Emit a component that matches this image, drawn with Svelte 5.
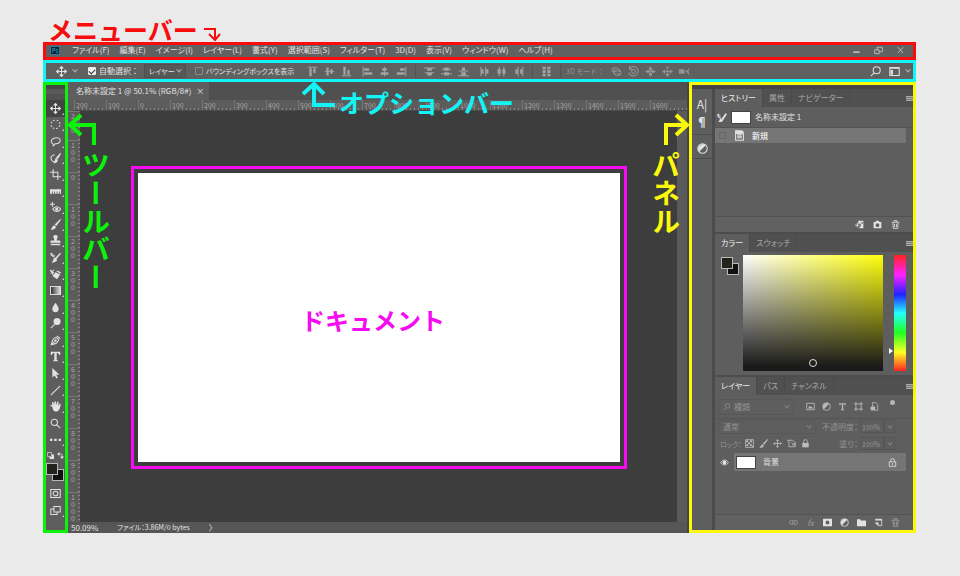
<script lang="ts">
	interface Icon {
		name: string;
		line?: string;
		fill?: string;
	}

	const menus = [
		'ファイル(F)', '編集(E)', 'イメージ(I)', 'レイヤー(L)', '書式(Y)', '選択範囲(S)',
		'フィルター(T)', '3D(D)', '表示(V)', 'ウィンドウ(W)', 'ヘルプ(H)'
	];

	const move = 'M7 1v12M1 7h12M5 3l2-2 2 2M5 11l2 2 2-2M3 5L1 7l2 2M11 5l2 2-2 2';

	const tools: Icon[] = [
		{ name: '移動', line: move, fill: 'M7 0l3 3H4zM7 14l3-3H4zM0 7l3-3v6zM14 7l-3-3v6z' },
		{ name: '楕円形選択', line: 'M1.500 5.500l1-2M4 2.200l2-.8M8.500 1.400l2 .9M12 4l.7 2M12.600 8l-1 2M10 11.500l-2 .8M5.500 12.200l-2-.9M2 10l-.8-2' },
		{ name: 'なげなわ', line: 'M4 10C1 9 1 6 3 4s8-3 9.500 0-1 6-5 6c-2 0-4 1-3.500 2s2 0 1-2' },
		{ name: 'クイック選択', line: 'M6 2.500C2 2 0 6 2 9s3 2.500 4 2', fill: 'M13 0l1 1-4 7-2.500-2zM7.500 6.500L10 9c0 3-3 4.500-6 4 2-1 2-5 3.500-6.500z' },
		{ name: '切り抜き', line: 'M4 0v10h10M0 4h10v10' },
		{ name: 'ものさし', fill: 'M0 4h14v6h-1.500V7h-1v3h-2V7h-1v3h-2V7h-1v3h-2V7h-1v3H0z' },
		{ name: '赤目修正', line: 'M3 0v6M0 3h6M3.500 9c2-4 8-4 10 0-2 4-8 4-10 0z', fill: 'M8.500 7a2 2 0 100 4 2 2 0 000-4z' },
		{ name: 'ブラシ', fill: 'M13 0l1 1-6 8-2-2zM5.500 8L7.500 10c0 3-4 4-7 3.500 2-1 2.500-5 5-5.500z' },
		{ name: 'スタンプ', fill: 'M7 0c3 0 3.500 2.500 2 4.500L8.500 7H12c1 0 1.500 1 1.500 3H.5C.5 8 1 7 2 7h3.500L5 4.500C3.500 2.500 4 0 7 0zM1 11h12v2H1z' },
		{ name: 'ヒストリーブラシ', line: 'M1 4h5M3 6h3', fill: 'M13 1l1 1-5.500 7-2-1.500zM6 7l3 3c0 2.500-4 4-7 3.500 2-1 2-5.500 4-6.500zM0 2l3-1v5z' },
		{ name: '消しゴム', line: 'M0 2l5 3M1 6l4-5M1 1l3 6', fill: 'M7 4l6 3-4 6-6-4zM9 2l5 2-1 2-5-3z' },
		{ name: 'グラデーション' },
		{ name: 'ぼかし', fill: 'M7 1c2 3 4 5 4 8a4 4 0 01-8 0c0-3 2-5 4-8z' },
		{ name: '覆い焼き', line: 'M6 8l-5 5', fill: 'M9 0a4.500 4.500 0 100 9 4.500 4.500 0 000-9z' },
		{ name: 'ペン', line: 'M9 1l4 4M8 3C4 4 3 6 1.500 12.500 8 11 10 10 11 6zM2 12l5-5M7 6a1 1 0 110 2 1 1 0 010-2z' },
		{ name: '文字', fill: 'M1 1h12v4h-1.500C11 3 10.500 2.500 8.500 2.500v9L10 12v1H4v-1l1.500-.5v-9C3.500 2.500 3 3 2.500 5H1z' },
		{ name: 'パス選択', fill: 'M3 0l9 8.500H8l2 4-2 1-2-4L3 12z' },
		{ name: '直線', line: 'M1 13L13 1' },
		{ name: '手のひら', fill: 'M3 8L0 5.500c.5-1.500 2-.5 3 .5L2.500 2c.3-1 1.500-1 2 0L5.500 5V1c.5-1 1.500-1 2 0l.3 4L9 1.500c.3-1 1.700-1 2 0L10.500 6 12 4c.5-.8 1.700-.5 1.700.5C13 8 12 13.500 8 13.500S4 11 3 8z' },
		{ name: 'ズーム', line: 'M5.500 1.500a4 4 0 110 8 4 4 0 010-8M8.500 8.500L13 13' },
		{ name: 'ツールバーを編集', fill: 'M0 6h3v3H0zM5.500 6h3v3h-3zM11 6h3v3h-3z' }
	];

	const alignGroups: Icon[][] = [
		[
			{ name: '上端揃え', line: 'M1 1.500h12', fill: 'M3 3h3v10H3zM8 3h3v6H8z' },
			{ name: '垂直方向中央揃え', line: 'M1 7h12', fill: 'M3 2h3v10H3zM8 4h3v6H8z' },
			{ name: '下端揃え', line: 'M1 12.500h12', fill: 'M3 1h3v10H3zM8 5h3v6H8z' }
		],
		[
			{ name: '左端揃え', line: 'M1.500 1v12', fill: 'M3 3h6v3H3zM3 8h10v3H3z' },
			{ name: '水平方向中央揃え', line: 'M7 1v12', fill: 'M4 3h6v3H4zM2 8h10v3H2z' },
			{ name: '右端揃え', line: 'M12.500 1v12', fill: 'M5 3h6v3H5zM1 8h10v3H1z' }
		],
		[
			{ name: '上端分布', line: 'M0 2.500h14M1 8.500h12', fill: 'M4 3h6v3H4zM4 9h6v3H4z' },
			{ name: '垂直方向中央分布', line: 'M1 4h12M0 10h14', fill: 'M4 2h6v4H4zM4 8h6v4H4z' },
			{ name: '下端分布', line: 'M1 6.500h12M0 12.500h14', fill: 'M5 2h4v4H5zM4 8h6v4H4z' }
		],
		[
			{ name: '左端分布', line: 'M2.500 1v12M8.500 1v12', fill: 'M3 4h3v6H3zM9 4h3v6H9z' },
			{ name: '水平方向中央分布', line: 'M4 1v12M10 1v12', fill: 'M2 4h4v6H2zM8 4h4v6H8z' },
			{ name: '右端分布', line: 'M6.500 1v12M12.500 1v12', fill: 'M3 4h3v6H3zM9 4h3v6H9z' }
		],
		[{ name: '自動整列', fill: 'M2 1h4v3H2zM8 1h4v3H8zM2 5h4v4H2zM8 5h4v4H8zM2 10h4v3H2zM8 10h4v3H8z' }]
	];

	const modes3d: Icon[] = [
		{ name: '3D 回転', line: 'M2 8C-1 3 5 1 8 3s6 4 4 7-8 2-8-1 5-4 8-2M8 9l4 3M5 4l-2 4' },
		{ name: '3D ロール', line: 'M2 3a6 6 0 11-1 5M2 0v4h4M7 4.500a2.500 2.500 0 110 5 2.500 2.500 0 010-5' },
		{ name: '3D パン', line: 'M7 2v10M2 7h10', fill: 'M7 0l3 5H4zM7 14l3-5H4zM0 7l5-3v6zM14 7L9 4v6z' },
		{ name: '3D スライド', line: 'M7 4v6M4 7h6', fill: 'M7 0l2 3H5zM7 14l3-4H4zM0 7l4-3v6zM14 7l-4-3v6z' },
		{ name: '3D ズーム', line: 'M13 3l-2 4 2 4', fill: 'M0 4h7v6H0zM8 7l3-2.500v5z' }
	];

	const trash: Icon = { name: '削除', line: 'M1 3.500h12M5 3V1h4v2M3 4l.5 9h7L11 4M5.500 6v5M8.500 6v5' };
	const camera = 'M1 3h3l1-2h4l1 2h3v10H1zM7 5a3 3 0 100 6 3 3 0 000-6z';
	const adjust: Icon = {
		name: '色調補正',
		line: 'M7 1a6 6 0 110 12A6 6 0 017 1z',
		fill: 'M2.800 11.200A6 6 0 0111.200 2.800z'
	};
	const lock: Icon = { name: 'すべてをロック', line: 'M4 6V4a3 3 0 016 0v2', fill: 'M2 6h10v7H2z' };
	const historyBrush: Icon = {
		name: 'ヒストリーブラシソース',
		line: 'M0 5h5M2 7h3',
		fill: 'M12 1l2 1-5 8-3-1zM5 8l4 2c-1 3-4 4-7 3 2-1 1-4 3-5zM0 3l3-2v5z'
	};

	const historyActions: Icon[] = [
		{ name: '新規ドキュメントを作成', line: 'M0 8h7M3.500 4.500v7', fill: 'M5 1h8v12H7v-3h2V6H5zM10 3v3h2V3z' },
		{ name: '新規スナップショット', fill: camera },
		trash
	];

	const filterIcons: Icon[] = [
		{ name: 'ピクセル', line: 'M1 2h12v10H1z', fill: 'M3 10l3-4 2 2 1-1 2 3z' },
		adjust,
		{ name: 'テキスト', fill: 'M2 2h10v3h-1.500L10 3.500H8V11l1.500 1v1h-5v-1L6 11V3.500H4L3.500 5H2z' },
		{ name: 'シェイプ', line: 'M3 0v14M11 0v14M0 3h14M0 11h14' },
		{ name: 'スマートオブジェクト', line: 'M4 7V1h5l3 3v9H8', fill: 'M1 7h7v6H1z' }
	];

	const lockIcons: Icon[] = [
		{ name: '透明ピクセルをロック', line: 'M1 1h12v12H1z', fill: 'M2 2h3v3H2zM8 2h3v3H8zM5 5h3v3H5zM2 8h3v3H2zM8 8h3v3H8zM11 11h2v2h-2z' },
		{ name: '画像ピクセルをロック', fill: tools[7].fill },
		{ name: '位置をロック', line: move },
		{ name: 'アートボードをロック', line: 'M0 2h9l4 4v6H3V2M7 5l5 5M8 9h4V6' },
		lock
	];

	const layerActions: Icon[] = [
		{ name: 'レイヤーをリンク', line: 'M6 4H4a3 3 0 000 6h2V4zM8 4h2a3 3 0 010 6H8V4z' },
		{ name: 'レイヤースタイル' },
		{ name: 'レイヤーマスクを追加', fill: 'M0 1h14v12H0zM7 4a3 3 0 100 6 3 3 0 000-6z' },
		adjust,
		{ name: '新規グループ', fill: 'M0 2h5l1 2h8v9H0z' },
		{ name: '新規レイヤー', line: 'M2 2h10v10H7', fill: 'M1 7h6v6zM2 2h10v2H2z' },
		trash
	];

	const xMarks = [200, 100, ...Array.from({ length: 17 }, (_, i) => i * 100)];
	const yMarks = [200, 100, ...Array.from({ length: 11 }, (_, i) => i * 100)];

	let activeTool = $state('移動');
	let autoSelect = $state(true);
	let showBounds = $state(false);
</script>

{#snippet glyph(icon: Icon)}
	<svg class="icon" viewBox="0 0 14 14" aria-hidden="true">
		{#if icon.line}<path class="line" d={icon.line} />{/if}
		{#if icon.fill}<path class="fill" fill-rule="evenodd" d={icon.fill} />{/if}
	</svg>
{/snippet}

{#snippet tabs(names: string[])}
	<div class="tabs" role="tablist">
		{#each names as name, i}
			<button class="tab" class:active={i === 0} role="tab" aria-selected={i === 0}>{name}</button>
		{/each}
		<button class="panel-menu" aria-label="パネルメニュー"></button>
	</div>
{/snippet}

<div class="page">
	<div class="app">
		<header class="menubar">
			<span class="logo">Ps</span>
			<nav>
				{#each menus as menu}
					<button>{menu}</button>
				{/each}
			</nav>
			<div class="window-buttons">
				<button aria-label="最小化">{@render glyph({ name: '', line: 'M2 9h10M2 10h10' })}</button>
				<button aria-label="元に戻す">{@render glyph({ name: '', line: 'M1 6h7v6H1zM5 6V2h8v7H8' })}</button>
				<button aria-label="閉じる">{@render glyph({ name: '', line: 'M3 2l8 9M11 2l-8 9' })}</button>
			</div>
			<div class="note note-menu">
				<span>メニューバー</span>
				<svg width="18" height="16" viewBox="0 0 18 16"><path d="M1 3h11v10M6 8l6 6 5-6" /></svg>
			</div>
		</header>

		<div class="options">
			<button class="current-tool" aria-label="移動ツール">{@render glyph(tools[0])}</button>
			<span class="caret"></span>
			<label class="check auto"><input type="checkbox" bind:checked={autoSelect} />自動選択：</label>
			<span class="select-box">
				<select aria-label="自動選択の対象"><option>レイヤー</option></select>
				<span class="caret"></span>
			</span>
			<label class="check bounds"><input type="checkbox" bind:checked={showBounds} />バウンディングボックスを表示</label>
			<div class="align">
				{#each alignGroups as group}
					<div class="align-group">
						{#each group as icon}
							<button aria-label={icon.name}>{@render glyph(icon)}</button>
						{/each}
					</div>
				{/each}
			</div>
			<div class="modes">
				<span>3D モード：</span>
				{#each modes3d as icon}
					<button aria-label={icon.name}>{@render glyph(icon)}</button>
				{/each}
			</div>
			<div class="options-end">
				<button aria-label="検索">{@render glyph({ name: '', line: 'M8.500 1a4.500 4.500 0 110 9 4.500 4.500 0 010-9M5 9l-4 4' })}</button>
				<button aria-label="ワークスペース">{@render glyph({ name: '', line: 'M1 2h12v10H1zM1 3h12', fill: 'M2 5h3v6H2z' })}</button>
				<span class="caret"></span>
			</div>
			<div class="note note-options">
				<svg width="36" height="28" viewBox="0 0 36 28"><path d="M34 24H13V3M2 13L13 3l10 10" /></svg>
				<span>オプションバー</span>
			</div>
		</div>

		<div class="workspace">
			<aside class="toolbar">
				<div class="grip"></div>
				<div class="tools">
					{#each tools as tool, i}
						<button
							class="tool"
							class:active={tool.name === activeTool}
							class:more={i !== 19}
							aria-label={tool.name}
							onclick={() => (activeTool = tool.name)}
						>
							{#if tool.name === 'グラデーション'}
								<span class="gradient"></span>
							{:else}
								{@render glyph(tool)}
							{/if}
						</button>
					{/each}
				</div>
				<div class="mini">
					<button aria-label="初期設定の色">{@render glyph({ name: '', line: 'M1 1h8v8H1z', fill: 'M10 5h4v9H5v-4h5z' })}</button>
					<button aria-label="色を入れ替え">{@render glyph({ name: '', line: 'M3 4h7v7', fill: 'M0 4l5-4v8zM10 14l-4-5h8z' })}</button>
				</div>
				<div class="swatches">
					<button class="back" aria-label="背景色"></button>
					<button class="fore" aria-label="描画色"></button>
				</div>
				<button class="mode" aria-label="クイックマスク">{@render glyph({ name: '', line: 'M1 2h12v10H1zM7 4a3 3 0 110 6 3 3 0 010-6' })}</button>
				<button class="mode more" aria-label="スクリーンモード">{@render glyph({ name: '', line: 'M5 2h8v7H5zM5 5H1v7h8V9' })}</button>
				<div class="note note-tools">
					<svg width="30" height="34" viewBox="0 0 30 34"><path d="M28 32V12H4M15 2L4 12l11 10" /></svg>
					<span>ツールバー</span>
				</div>
			</aside>

			<main>
				<div class="doc-tabs">
					<div class="doc-tab">
						<span>名称未設定 1 @ 50.1% (RGB/8#)</span>
						<button aria-label="閉じる">×</button>
					</div>
				</div>
				<div class="ruler-x">
					{#each xMarks as mark}
						<span>{mark}</span>
					{/each}
				</div>
				<div class="stage">
					<div class="ruler-y">
						{#each yMarks as mark}
							<span>{mark}</span>
						{/each}
					</div>
					<div class="canvas">
						<div class="frame">
							<div class="document">ドキュメント</div>
						</div>
					</div>
					<div class="scroll"></div>
				</div>
				<footer class="status">
					<span class="zoom">50.09%</span>
					<span class="size">ファイル：3.86M/0 bytes</span>
					<span>〉</span>
				</footer>
			</main>

			<aside class="panels">
				<div class="collapse"></div>
				<div class="columns">
					<div class="dock">
						<div class="dock-group">
							<button class="char" aria-label="文字">A|</button>
							<button class="char para" aria-label="段落">¶</button>
						</div>
						<div class="dock-group">
							<button aria-label="色調補正">{@render glyph(adjust)}</button>
						</div>
					</div>

					<div class="stack">
						<section class="history">
							{@render tabs(['ヒストリー', '属性', 'ナビゲーター'])}
							<div class="snapshot">
								{@render glyph(historyBrush)}
								<span class="thumb"></span>
								<span>名称未設定 1</span>
							</div>
							<div class="state">
								<span class="slot"></span>
								{@render glyph({ name: '', line: 'M2 1h7l3 3v9H2zM4 6h6M4 8h6M4 10h6', fill: 'M2 1h10v4H2z' })}
								<span>新規</span>
							</div>
							<div class="actions">
								{#each historyActions as icon}
									<button aria-label={icon.name}>{@render glyph(icon)}</button>
								{/each}
							</div>
						</section>

						<section class="color">
							{@render tabs(['カラー', 'スウォッチ'])}
							<div class="color-body">
								<div class="swatches">
									<button class="back" aria-label="背景色"></button>
									<button class="fore" aria-label="描画色"></button>
								</div>
								<div class="picker"><span class="cursor"></span></div>
								<div class="hue"><span class="pointer"></span></div>
							</div>
						</section>

						<section class="layers">
							{@render tabs(['レイヤー', 'パス', 'チャンネル'])}
							<div class="row filter">
								<span class="field kind">
									{@render glyph({ name: '', line: 'M8 1a4 4 0 110 8 4 4 0 010-8M5 9l-4 4' })}
									<select aria-label="フィルターの種類"><option>種類</option></select>
									<span class="caret"></span>
								</span>
								<div class="icons">
									{#each filterIcons as icon}
										<button aria-label={icon.name}>{@render glyph(icon)}</button>
									{/each}
								</div>
								<button class="toggle" aria-label="フィルターの切り替え"></button>
							</div>
							<div class="row blend">
								<span class="field blend-mode">
									<select aria-label="描画モード"><option>通常</option></select>
									<span class="caret"></span>
								</span>
								<label class="percent">不透明度：<input value="100%" /></label>
								<span class="drop"><span class="caret"></span></span>
							</div>
							<div class="row locks">
								<span>ロック：</span>
								<div class="icons">
									{#each lockIcons as icon}
										<button aria-label={icon.name}>{@render glyph(icon)}</button>
									{/each}
								</div>
								<label class="percent">塗り：<input value="100%" /></label>
								<span class="drop"><span class="caret"></span></span>
							</div>
							<div class="layer">
								<button class="eye" aria-label="レイヤーの表示">{@render glyph({ name: '', line: 'M1 7c3-5 9-5 12 0-3 5-9 5-12 0z', fill: 'M7 4a3 3 0 100 6 3 3 0 000-6z' })}</button>
								<div class="layer-name">
									<span class="thumb"></span>
									<span>背景</span>
									{@render glyph({ name: '', line: 'M4 6V4a3 3 0 016 0v2M2 6h10v7H2zM7 8v3' })}
								</div>
							</div>
							<div class="actions">
								{#each layerActions as icon}
									<button aria-label={icon.name}>
										{#if icon.name === 'レイヤースタイル'}<em>fx</em>{:else}{@render glyph(icon)}{/if}
									</button>
								{/each}
							</div>
						</section>
					</div>
				</div>
				<div class="note note-panels">
					<svg width="38" height="34" viewBox="0 0 38 34"><path d="M14 32V12h21M24 2l11 10-11 10" /></svg>
					<span>パネル</span>
				</div>
			</aside>
		</div>
	</div>
</div>

<style>
	:global(body) {
		margin: 0;
		background: #eaeaea;
	}

	.page {
		box-sizing: border-box;
		min-height: 100vh;
		padding: 42px 44px 43px 43px;
		display: flex;
		overflow: hidden;
		font-family: 'Noto Sans CJK JP', sans-serif;
		font-size: 8px;
		line-height: 12px;
		color: #e2e2e2;
		white-space: nowrap;
		font-feature-settings: 'palt';
	}

	.page * {
		box-sizing: border-box;
	}

	.app {
		flex: 1;
		min-width: 0;
		display: flex;
		flex-direction: column;
		background: #5f5f5f;
	}

	button,
	select,
	input {
		font: inherit;
		font-feature-settings: inherit;
		color: inherit;
		background: none;
		border: none;
		border-radius: 0;
		margin: 0;
		padding: 0;
		appearance: none;
	}

	button {
		display: flex;
		align-items: center;
		justify-content: center;
		flex: none;
	}

	.icon {
		display: block;
		flex: none;
		width: 11px;
		height: 11px;
	}

	.line {
		fill: none;
		stroke: currentColor;
		stroke-width: 1.3;
	}

	.fill {
		fill: currentColor;
	}

	.caret {
		flex: none;
		width: 4px;
		height: 4px;
		border: solid currentColor;
		border-width: 0 1px 1px 0;
		transform: rotate(45deg) translate(-1px, -1px);
		opacity: 0.7;
	}

	/* menu bar */
	.menubar {
		position: relative;
		flex: none;
		height: 18px;
		display: flex;
		align-items: center;
		padding: 0 8px 2px 4px;
		border: 3px solid #f80d0d;
		background: #616161;
	}

	.logo {
		width: 10px;
		height: 9px;
		margin-right: 12px;
		border: 1px solid #2f7c9c;
		background: #0b2433;
		color: #41a7d4;
		font-size: 6px;
		line-height: 7px;
		text-align: center;
	}

	nav {
		display: flex;
		gap: 10px;
	}

	.window-buttons {
		margin-left: auto;
		display: flex;
		gap: 13px;
		color: #c8c8c8;
	}

	.window-buttons .icon {
		width: 9px;
		height: 9px;
	}

	/* options bar */
	.options {
		position: relative;
		flex: none;
		height: 22px;
		display: flex;
		align-items: center;
		padding: 0 3px 0 10px;
		border: 3px solid #12f4f6;
		background: #606060;
	}

	.options > .caret {
		margin: 0 11px 0 6px;
	}

	.check {
		flex: none;
		display: flex;
		align-items: center;
		gap: 3px;
	}

	.check input {
		flex: none;
		display: grid;
		place-items: center;
		width: 8px;
		height: 8px;
		border: 1px solid #8a8a8a;
		border-radius: 1px;
	}

	.check input:checked {
		border-color: #eee;
		background: #eee;
	}

	.check input:checked::after {
		content: '';
		width: 5px;
		height: 3px;
		border: solid #333;
		border-width: 0 0 1px 1px;
		transform: rotate(-45deg);
	}

	.auto {
		width: 56px;
		font-feature-settings: normal;
	}

	.select-box {
		flex: none;
		display: flex;
		align-items: center;
		width: 42px;
		height: 14px;
		padding: 0 4px;
		border: 1px solid #4f4f4f;
		background: #575757;
	}

	.select-box select {
		flex: 1;
		min-width: 0;
		font-size: 7px;
	}

	.bounds {
		width: 107px;
		margin-left: 9px;
		font-size: 7px;
	}

	.align {
		display: flex;
		color: #a2a2a2;
	}

	.align-group {
		display: flex;
		gap: 6px;
		padding: 1px 5px;
	}

	.align-group:nth-child(2),
	.align-group:nth-child(4) {
		padding-right: 8px;
	}

	.align-group:nth-child(n + 3):nth-child(odd) {
		padding-left: 8px;
		border-left: 1px solid #525252;
	}

	.align-group:last-child {
		padding-right: 8px;
		border-right: 1px solid #525252;
	}

	.modes {
		display: flex;
		gap: 6px;
		align-items: center;
		margin-left: 5px;
		color: #949494;
	}

	.modes span {
		width: 39px;
		font-size: 7px;
		font-feature-settings: normal;
	}

	.options-end {
		display: flex;
		align-items: center;
		gap: 8px;
		margin-left: auto;
	}

	.options-end .caret {
		margin-left: -2px;
	}

	.workspace {
		flex: 1;
		display: flex;
		min-height: 0;
	}

	/* toolbar */
	.toolbar {
		position: relative;
		flex: none;
		width: 25px;
		display: flex;
		flex-direction: column;
		border: 3px solid #0df20d;
		background: #5d5d5d;
	}

	.grip {
		height: 15px;
		border-top: 4px solid #454545;
		background: linear-gradient(#595959 50%, #515151 50%);
	}

	.tools {
		flex: 1;
		display: flex;
		flex-direction: column;
	}

	.tool {
		position: relative;
		flex: 1;
	}

	.tool.active {
		background: #444;
	}

	.more {
		position: relative;
	}

	.more::after {
		content: '';
		position: absolute;
		right: 1px;
		bottom: 2px;
		border-left: 2px solid transparent;
		border-bottom: 2px solid #ccc;
	}

	.gradient {
		width: 11px;
		height: 9px;
		border: 1px solid #ddd;
		background: linear-gradient(90deg, #333, #ddd);
	}

	.mini {
		display: flex;
		justify-content: space-between;
		padding: 4px 1px;
	}

	.mini .icon {
		width: 7px;
		height: 7px;
	}

	.swatches {
		display: grid;
		grid-template: repeat(3, 6px) / repeat(3, 6px);
	}

	.back,
	.fore {
		border: 1px solid #b9b9b9;
	}

	.back {
		grid-area: 2 / 2 / 4 / 4;
		background: #111;
	}

	.fore {
		grid-area: 1 / 1 / 3 / 3;
		background: #23231b;
	}

	.mode {
		height: 17px;
	}

	.swatches + .mode {
		margin-top: 4px;
	}

	.mode:nth-last-child(2) {
		margin-bottom: 11px;
	}

	/* document area */
	main {
		flex: 1;
		min-width: 0;
		display: flex;
		flex-direction: column;
		border-right: 2px solid #454545;
		background: #5c5c5c;
	}

	.doc-tabs {
		flex: none;
		height: 18px;
		display: flex;
		background: #505050;
	}

	.doc-tab {
		display: flex;
		align-items: center;
		gap: 5px;
		padding: 0 5px 0 8px;
		background: #5e5e5e;
	}

	.ruler-x {
		flex: none;
		height: 11px;
		display: flex;
		overflow: hidden;
		margin-left: 6px;
		font-size: 7px;
		line-height: 10px;
		color: #a5a5a5;
		border-bottom: 1px solid #4a4a4a;
		background: repeating-linear-gradient(90deg, #888 0 1px, transparent 1px 4px) bottom / 100% 2px no-repeat;
	}

	.ruler-x span {
		flex: none;
		width: 32px;
		padding-left: 1px;
		border-left: 1px solid #777;
	}

	.stage {
		flex: 1;
		min-height: 0;
		display: flex;
	}

	.ruler-y {
		flex: none;
		width: 12px;
		height: 0;
		min-height: 100%;
		overflow: hidden;
		display: flex;
		flex-direction: column;
		font-size: 7px;
		line-height: 8px;
		color: #a5a5a5;
		background: repeating-linear-gradient(#888 0 1px, transparent 1px 4px) right / 2px 100% no-repeat;
	}

	.ruler-y span {
		flex: none;
		width: 12px;
		height: 32px;
		padding: 1px 3px 0 1px;
		border-top: 1px solid #777;
		writing-mode: vertical-rl;
		text-orientation: upright;
	}

	.ruler-y span:first-child {
		height: 29px;
	}

	.canvas {
		flex: 1;
		display: flex;
		padding: 55px 50px 53px 51px;
		background: #3d3d3d;
	}

	.frame {
		flex: 1;
		display: flex;
		padding: 4px;
		border: 3px solid #f60cf0;
	}

	.document {
		flex: 1;
		display: flex;
		align-items: center;
		justify-content: center;
		padding: 4px 12px 0 0;
		background: #fff;
		color: #f60cf0;
		font-size: 24px;
		font-weight: 700;
		line-height: 32px;
		font-feature-settings: normal;
	}

	.scroll {
		flex: none;
		width: 10px;
		background: #5a5a5a;
	}

	.status {
		flex: none;
		height: 11px;
		display: flex;
		line-height: 11px;
		padding-left: 3px;
		background: #565656;
	}

	.zoom {
		width: 46px;
	}

	.size {
		width: 92px;
		font-size: 7px;
	}

	/* panels */
	.panels {
		position: relative;
		flex: none;
		width: 227px;
		display: flex;
		flex-direction: column;
		border: 3px solid #fbf90b;
		background: #4c4c4c;
	}

	.collapse {
		flex: none;
		height: 4px;
		background: #454545;
	}

	.columns {
		flex: 1;
		display: flex;
		gap: 3px;
	}

	.dock {
		flex: none;
		width: 20px;
		background: #5e5e5e;
	}

	.dock-group {
		display: flex;
		flex-direction: column;
		align-items: center;
		gap: 5px;
		padding: 8px 0 6px;
		border-bottom: 1px solid #4c4c4c;
	}

	.dock-group + .dock-group {
		padding: 8px 0 4px;
	}

	.char {
		font-size: 12px;
		line-height: 13px;
	}

	.para {
		font-weight: 700;
	}

	.stack {
		flex: 1;
		min-width: 0;
		display: flex;
		flex-direction: column;
		gap: 2px;
	}

	section {
		display: flex;
		flex-direction: column;
		background: #5e5e5e;
	}

	.tabs {
		flex: none;
		height: 18px;
		display: flex;
		background: #505050;
		color: #a8a8a8;
	}

	.tab {
		padding: 0 6px;
		border-right: 1px solid #4a4a4a;
	}

	.tab.active {
		background: #5e5e5e;
		color: #ececec;
	}

	.panel-menu {
		width: 7px;
		height: 5px;
		margin: 7px 0 0 auto;
		background: repeating-linear-gradient(#aaa 0 1px, #777 1px 2px);
	}

	.history {
		height: 143px;
	}

	.snapshot {
		height: 21px;
		display: flex;
		align-items: center;
		gap: 4px;
		padding-left: 2px;
		border-bottom: 1px solid #535353;
	}

	.snapshot .icon {
		width: 10px;
	}

	.thumb {
		width: 20px;
		height: 13px;
		border: 1px solid #444;
		background: #fff;
	}

	.state {
		height: 15px;
		display: flex;
		align-items: center;
		margin-right: 7px;
		padding-left: 4px;
		background: #757575;
		font-weight: 700;
	}

	.state .icon {
		margin: 0 7px 0 8px;
	}

	.slot {
		width: 7px;
		height: 7px;
		border: 1px solid #686868;
	}

	.actions {
		display: flex;
		align-items: center;
		justify-content: flex-end;
		gap: 9px;
		height: 16px;
		margin-top: auto;
		padding-right: 13px;
		border-top: 1px solid #525252;
		background: #616161;
	}

	.actions .icon {
		width: 9px;
		height: 9px;
	}

	.color {
		height: 141px;
	}

	.color-body {
		flex: 1;
		display: flex;
		padding: 3px 7px 4px 6px;
	}

	.color-body .swatches {
		margin: 2px 4px 0 0;
	}

	.picker {
		position: relative;
		flex: 1;
		background: linear-gradient(transparent, #1a1a1a 96%), linear-gradient(90deg, #fff, #ffff0a);
	}

	.cursor {
		position: absolute;
		left: 47%;
		bottom: 4px;
		width: 8px;
		height: 8px;
		border: 1px solid #ddd;
		border-radius: 50%;
	}

	.hue {
		position: relative;
		width: 12px;
		margin-left: 11px;
		background: linear-gradient(#f22, #f2f 17%, #22f 34%, #2ff 50%, #2f2 67%, #ff2 84%, #f22);
	}

	.pointer {
		position: absolute;
		left: -5px;
		top: 80%;
		border: solid transparent;
		border-width: 3px 0 3px 4px;
		border-left-color: #fff;
	}

	.layers {
		flex: 1;
	}

	.row {
		display: flex;
		align-items: center;
		color: #939393;
	}

	.filter {
		height: 24px;
		padding: 0 18px 0 3px;
		border-bottom: 1px solid #545454;
	}

	.field {
		display: flex;
		align-items: center;
		height: 14px;
		padding: 0 4px;
		border: 1px solid #575757;
	}

	.field select {
		flex: 1;
		min-width: 0;
	}

	.kind {
		gap: 3px;
		width: 76px;
		height: 16px;
	}

	.field .icon {
		width: 8px;
		height: 8px;
	}

	.icons {
		display: flex;
		gap: 7px;
		color: #bcbcbc;
	}

	.icons .icon {
		width: 9px;
		height: 9px;
	}

	.filter .icons {
		margin-left: 12px;
	}

	.toggle {
		width: 5px;
		height: 5px;
		margin: 0 0 8px auto;
		border-radius: 50%;
		background: #b5b5b5;
	}

	.blend {
		height: 15px;
		padding: 0 18px 0 3px;
	}

	.blend-mode {
		width: 98px;
	}

	.percent {
		display: flex;
		align-items: center;
		gap: 2px;
		margin-left: auto;
	}

	.percent input {
		width: 24px;
		height: 13px;
		padding: 0 1px;
		border: 1px solid #565656;
		font-size: 7px;
	}

	.drop {
		display: flex;
		align-items: center;
		justify-content: center;
		width: 11px;
		height: 13px;
		border: 1px solid #565656;
	}

	.locks {
		height: 19px;
		padding: 0 18px 0 5px;
	}

	.locks > span:first-child {
		width: 25px;
		font-size: 7px;
	}

	.locks .icons {
		gap: 5px;
	}

	.layer {
		display: flex;
		height: 18px;
		margin-right: 7px;
	}

	.eye {
		width: 19px;
	}

	.eye .icon {
		width: 9px;
		height: 9px;
	}

	.layer-name {
		flex: 1;
		display: flex;
		align-items: center;
		gap: 7px;
		padding: 0 9px 0 2px;
		background: #757575;
	}

	.layer-name .icon {
		width: 9px;
		height: 9px;
		margin-left: auto;
	}

	.layers .actions {
		gap: 8px;
	}

	.layers .actions button {
		width: 9px;
	}

	.layers .actions button:first-child,
	.layers .actions button:nth-child(2),
	.layers .actions button:last-child {
		color: #a0a0a0;
	}

	/* callouts over the window */
	.note {
		position: absolute;
		z-index: 1;
		display: flex;
		font-size: 25px;
		font-weight: 700;
		line-height: 25px;
		font-feature-settings: normal;
		pointer-events: none;
	}

	.note path {
		fill: none;
		stroke: currentColor;
		stroke-width: 4;
	}

	.note-menu {
		left: 2px;
		bottom: 15px;
		align-items: flex-end;
		gap: 5px;
		color: #f80d0d;
	}

	.note-menu path {
		stroke-width: 2;
	}

	.note-options {
		left: 255px;
		top: 18px;
		gap: 2px;
		color: #12f4f6;
	}

	.note-options span {
		padding-top: 9px;
	}

	.note-tools {
		left: 20px;
		top: 28px;
		flex-direction: column;
		color: #0df20d;
	}

	.note-panels {
		right: 223px;
		top: 28px;
		flex-direction: column;
		align-items: flex-start;
		color: #fbf90b;
	}

	.note-tools,
	.note-panels {
		gap: 4px;
		font-size: 28px;
		line-height: 28px;
	}

	.note-tools span,
	.note-panels span {
		writing-mode: vertical-rl;
	}

	.note-tools span {
		padding-left: 16px;
	}
</style>
